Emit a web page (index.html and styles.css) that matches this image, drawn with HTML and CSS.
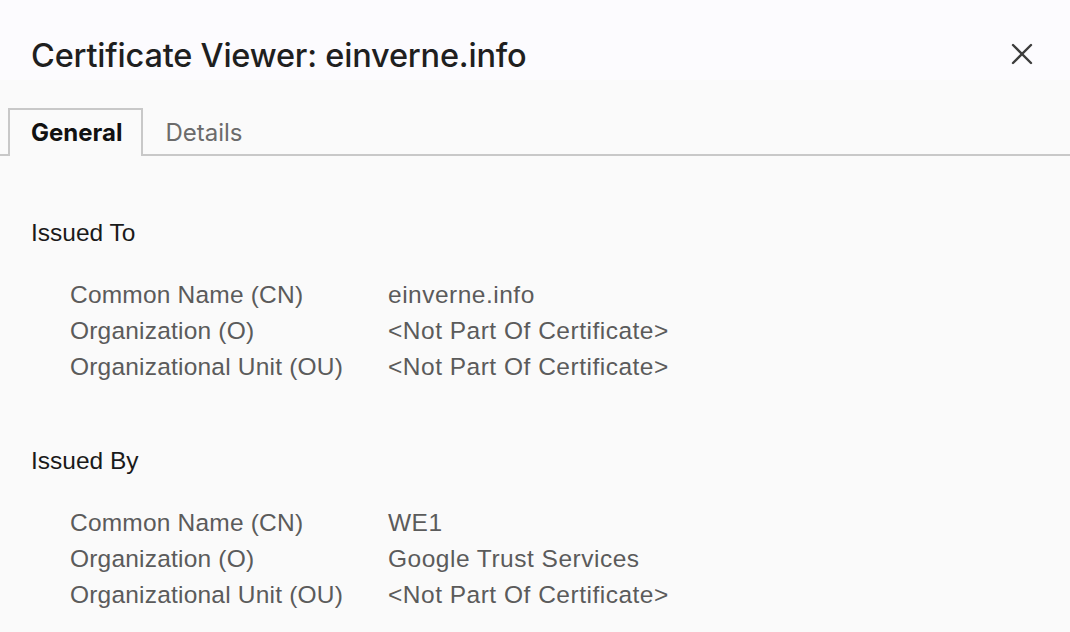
FILE: index.html
```html
<!DOCTYPE html>
<html>
<head>
<meta charset="utf-8">
<link rel="stylesheet" href="styles.css">
</head>
<body>
<div class="dialog">
  <header class="header">
    <h1 class="title">Certificate Viewer: einverne.info</h1>
    <button class="close" aria-label="Close">
      <svg width="22" height="22" viewBox="0 0 22 22"><path d="M2 2 L20 20 M20 2 L2 20" stroke="#3c3c3c" stroke-width="2.4" stroke-linecap="round" fill="none"/></svg>
    </button>
  </header>
  <div class="tabs">
    <div class="tab tab-active">General</div>
    <div class="tab">Details</div>
    <div class="tab-fill"></div>
  </div>
  <main class="content">
    <section class="section">
      <h2 class="section-title">Issued To</h2>
      <div class="fields">
        <div class="label">Common Name (CN)</div><div class="value">einverne.info</div>
        <div class="label">Organization (O)</div><div class="value">&lt;Not Part Of Certificate&gt;</div>
        <div class="label">Organizational Unit (OU)</div><div class="value">&lt;Not Part Of Certificate&gt;</div>
      </div>
    </section>
    <section class="section">
      <h2 class="section-title">Issued By</h2>
      <div class="fields">
        <div class="label">Common Name (CN)</div><div class="value">WE1</div>
        <div class="label">Organization (O)</div><div class="value">Google Trust Services</div>
        <div class="label">Organizational Unit (OU)</div><div class="value">&lt;Not Part Of Certificate&gt;</div>
      </div>
    </section>
  </main>
</div>
</body>
</html>
```

FILE: styles.css
```css
* { box-sizing: border-box; }
html, body { margin: 0; padding: 0; }
body {
  width: 1070px;
  height: 632px;
  overflow: hidden;
  background: #fafafa;
  font-family: "Liberation Sans", Arial, sans-serif;
}
.dialog { display: flex; flex-direction: column; }
.header {
  height: 80px;
  background: #fcfbfe;
  display: flex;
  align-items: flex-start;
  justify-content: space-between;
  padding: 0 37px 0 31px;
}
.title {
  margin: 36px 0 0 0;
  font-family: Inter, "Noto Sans", sans-serif;
  font-weight: 500;
  font-size: 32.5px;
  line-height: 40px;
  color: #1f1f1f;
  letter-spacing: -0.2px;
}
.close {
  margin-top: 43px;
  width: 22px;
  height: 22px;
  padding: 0;
  border: 0;
  background: transparent;
  display: flex;
}
.tabs {
  margin-top: 28px;
  display: flex;
  height: 48px;
}
.tabs::before {
  content: "";
  width: 8px;
  border-bottom: 2px solid #c8c8c8;
}
.tab {
  font-family: Inter, "Noto Sans", sans-serif;
  font-size: 24px;
  color: #6b6b6b;
  padding: 0 22px;
  display: flex;
  align-items: center;
  border-bottom: 2px solid #c8c8c8;
  padding-top: 2px;
}
.tab-active {
  color: #111;
  font-weight: 700;
  border: 2px solid #c8c8c8;
  border-bottom: 0;
  padding: 0 19px 2px 21px;
}
.tab-fill { flex: 1; border-bottom: 2px solid #c8c8c8; }
.content { padding: 0 31px; }
.section { margin-top: 61px; }
.section + .section { margin-top: 60px; }
.section-title {
  margin: 0;
  font-weight: 400;
  font-size: 24.5px;
  line-height: 32px;
  color: #1a1a1a;
}
.fields {
  margin-top: 28px;
  padding-left: 39px;
  display: grid;
  grid-template-columns: 318px auto;
  grid-auto-rows: 36px;
  align-items: center;
  font-size: 24.5px;
  color: #5b5b5b;
}
.label { letter-spacing: 0.2px; }
.value { letter-spacing: 0.5px; }
```
